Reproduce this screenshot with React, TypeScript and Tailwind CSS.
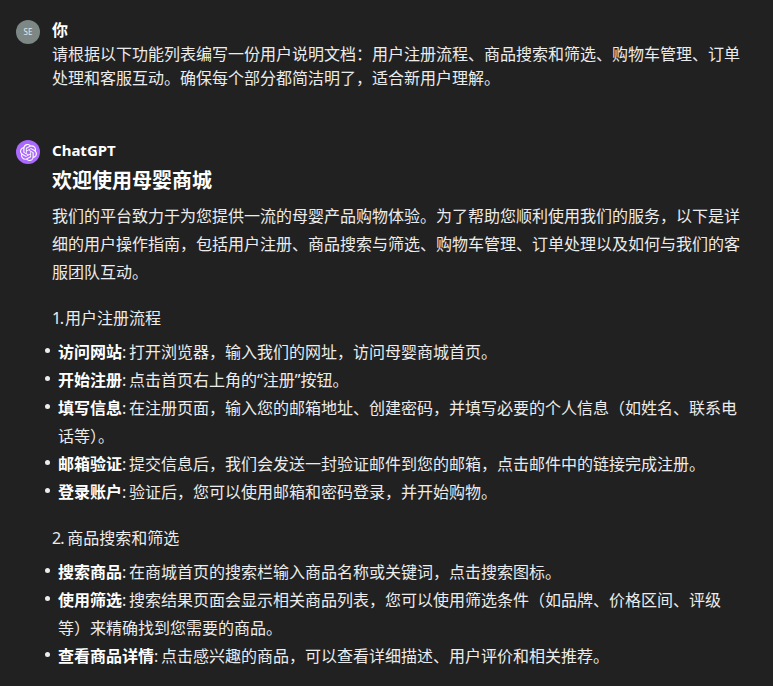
import type { ReactNode } from "react";
import { SiOpenai } from "react-icons/si";

function Li({ b, children }: { b: string; children: ReactNode }) {
  return (
    <li className="relative pl-[6px]">
      <span className="absolute left-[-7px] top-[10px] w-[5px] h-[5px] rounded-full bg-[#ececec]" />
      <span className="font-bold text-white">{b}</span>
      <span className="tracking-[-0.7px]">: </span>
      {children}
    </li>
  );
}

export default function App() {
  return (
    <div className="w-[773px] h-[686px] overflow-hidden bg-[#212121] text-[#ececec] text-[16px] leading-[28px] font-['Noto_Sans','Noto_Sans_CJK_SC',sans-serif]">
      <div className="flex gap-[12px] pl-[16px] pt-[18px]">
        <div className="w-6 h-6 mt-[2px] rounded-full bg-[#7c8786] shrink-0 flex items-center justify-center text-[8px] text-[#e4e8e8]">SE</div>
        <div className="w-[692px]">
          <div className="font-bold text-white leading-[24px]">你</div>
          <div className="leading-[24px]">请根据以下功能列表编写一份用户说明文档：用户注册流程、商品搜索和筛选、购物车管理、订单处理和客服互动。确保每个部分都简洁明了，适合新用户理解。</div>
        </div>
      </div>
      <div className="flex gap-[12px] pl-[16px] pt-[48px]">
        <div className="w-6 h-6 mt-[2px] rounded-full bg-[#ab68ff] shrink-0 flex items-center justify-center">
          <SiOpenai className="w-[17px] h-[17px] text-white" />
        </div>
        <div className="w-[692px]">
          <div className="font-bold text-white text-[15px] leading-[24px]">ChatGPT</div>
          <h2 className="font-bold text-white text-[20px] leading-[30px] mt-[4px]">欢迎使用母婴商城</h2>
          <p className="mt-[6px]">我们的平台致力于为您提供一流的母婴产品购物体验。为了帮助您顺利使用我们的服务，以下是详细的用户操作指南，包括用户注册、商品搜索与筛选、购物车管理、订单处理以及如何与我们的客服团队互动。</p>
          <p className="mt-[18px]"><span className="tracking-[-1.5px]">1. </span>用户注册流程</p>
          <ul className="mt-[6px]">
            <Li b="访问网站">打开浏览器，输入我们的网址，访问母婴商城首页。</Li>
            <Li b="开始注册">点击首页右上角的“注册”按钮。</Li>
            <Li b="填写信息">在注册页面，输入您的邮箱地址、创建密码，并填写必要的个人信息（如姓名、联系电话等）。</Li>
            <Li b="邮箱验证">提交信息后，我们会发送一封验证邮件到您的邮箱，点击邮件中的链接完成注册。</Li>
            <Li b="登录账户">验证后，您可以使用邮箱和密码登录，并开始购物。</Li>
          </ul>
          <p className="mt-[18px]"><span className="tracking-[-0.8px]">2. </span>商品搜索和筛选</p>
          <ul className="mt-[6px]">
            <Li b="搜索商品">在商城首页的搜索栏输入商品名称或关键词，点击搜索图标。</Li>
            <Li b="使用筛选">搜索结果页面会显示相关商品列表，您可以使用筛选条件（如品牌、价格区间、评级等）来精确找到您需要的商品。</Li>
            <Li b="查看商品详情">点击感兴趣的商品，可以查看详细描述、用户评价和相关推荐。</Li>
          </ul>
        </div>
      </div>
    </div>
  );
}
